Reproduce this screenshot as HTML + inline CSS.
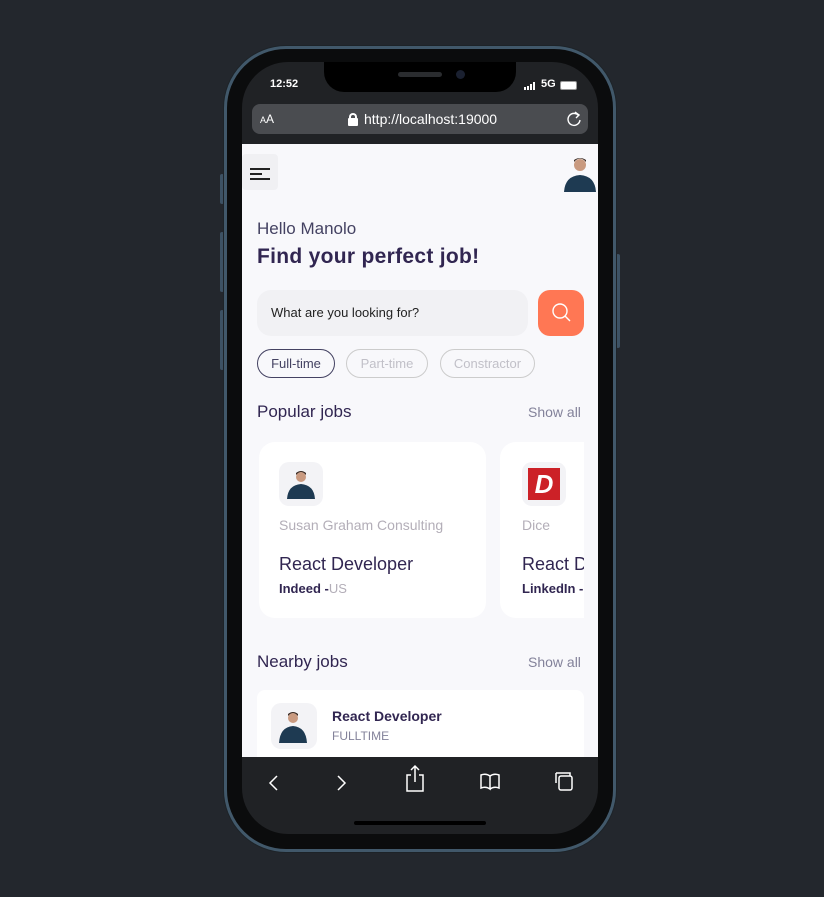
<!DOCTYPE html>
<html><head><style>
*{margin:0;padding:0;box-sizing:border-box}
body{width:824px;height:897px;background:#23272d;font-family:"Liberation Sans",sans-serif;position:relative;overflow:hidden}
.frame{position:absolute;left:224px;top:46px;width:392px;height:806px;border-radius:62px;background:#0b0c0d;border:3px solid #41586a;box-shadow:0 0 0 1px #1d2328}
.btn{position:absolute;width:4px;background:#3d5264;border-radius:2px}
.screen{position:absolute;left:242px;top:62px;width:356px;height:772px;border-radius:46px;overflow:hidden;background:#202225}
.notch{position:absolute;left:82px;top:0;width:192px;height:30px;background:#000;border-radius:0 0 20px 20px}
.abs{position:absolute}
.content{position:absolute;left:0;top:82px;width:356px;height:613px;background:#f8f8fb;overflow:hidden}
.t{position:absolute;white-space:nowrap}
.card{position:absolute;background:#fff;border-radius:16px}
.chip{position:absolute;height:29px;border-radius:15px;border:1px solid #ccc;font-size:13px;line-height:27px;text-align:center}
</style></head><body>
<div class="btn" style="left:220px;top:174px;height:30px"></div>
<div class="btn" style="left:220px;top:232px;height:60px"></div>
<div class="btn" style="left:220px;top:310px;height:60px"></div>
<div class="btn" style="left:616px;top:254px;height:94px"></div>
<div class="frame"></div>
<div class="screen">
 <div class="notch"><div class="abs" style="left:74px;top:10px;width:44px;height:5px;border-radius:3px;background:#2a2c2f"></div><div class="abs" style="left:132px;top:8px;width:9px;height:9px;border-radius:50%;background:#1a2030"></div></div>
 <div class="t" style="left:28px;top:16px;color:#fff;font-size:11px;font-weight:bold">12:52</div>
 <div class="abs" style="left:282px;top:20px;width:14px;height:8px">
  <div class="abs" style="left:0;top:5px;width:2px;height:3px;background:#fff"></div><div class="abs" style="left:3px;top:4px;width:2px;height:4px;background:#fff"></div><div class="abs" style="left:6px;top:2px;width:2px;height:6px;background:#fff"></div><div class="abs" style="left:9px;top:0;width:2px;height:8px;background:#fff"></div></div>
 <div class="t" style="left:299px;top:16px;color:#fff;font-size:11px;font-weight:bold">5G</div>
 <div class="abs" style="left:318px;top:19px;width:17px;height:9px;border-radius:2px;background:#fff;border:1px solid #999"></div>
 <div class="abs" style="left:10px;top:42px;width:336px;height:30px;border-radius:8px;background:#4a4c50"></div>
 <div class="t" style="left:18px;top:50px;color:#fff;font-size:12px"><span style="font-size:9px">A</span>A</div>
 <div class="abs" style="left:107px;top:51px;width:8px;height:8px;border:2px solid #fff;border-bottom:none;border-radius:4px 4px 0 0"></div>
 <div class="abs" style="left:106px;top:56px;width:10px;height:8px;background:#fff;border-radius:1px"></div>
 <div class="t" style="left:122px;top:49px;color:#fff;font-size:14px">http://localhost:19000</div>
 <svg class="abs" style="left:323px;top:48px" width="18" height="18" viewBox="0 0 18 18"><path d="M14 6A6 6 0 1 0 15 10" fill="none" stroke="#fff" stroke-width="1.4"/><path d="M10 2L14 5L11 8" fill="none" stroke="#fff" stroke-width="1.4"/></svg>
 <div class="content">
  <div class="abs" style="left:0;top:10px;width:36px;height:36px;background:#f0f0f3;border-radius:4px"></div>
  <div class="abs" style="left:8px;top:24px;width:20px;height:1.5px;background:#222"></div>
  <div class="abs" style="left:8px;top:29px;width:12px;height:1.5px;background:#222"></div>
  <div class="abs" style="left:8px;top:34px;width:20px;height:1.5px;background:#222"></div>
  <svg class="abs" style="left:320px;top:10px" width="36" height="38" viewBox="0 0 36 38"><circle cx="18" cy="11" r="6" fill="#c99a80"/><path d="M12 8Q18 1 24 8L24 6Q18 2 12 6Z" fill="#3a2a22"/><path d="M2 38Q3 22 18 21Q33 22 34 38Z" fill="#1e3a52"/></svg>
  <div class="t" style="left:15px;top:75px;font-size:17px;color:#444262">Hello Manolo</div>
  <div class="t" style="left:15px;top:101px;font-size:21px;font-weight:bold;color:#312651;letter-spacing:0.3px">Find your perfect job!</div>
  <div class="abs" style="left:15px;top:146px;width:271px;height:46px;background:#f1f1f4;border-radius:14px"></div>
  <div class="t" style="left:29px;top:161px;font-size:13px;color:#222">What are you looking for?</div>
  <div class="abs" style="left:296px;top:146px;width:46px;height:46px;background:#ff7754;border-radius:12px"></div>
  <svg class="abs" style="left:308px;top:157px" width="22" height="22" viewBox="0 0 22 22"><circle cx="10" cy="10" r="7" fill="none" stroke="#fff" stroke-width="1.4"/><path d="M15 15L20 20" stroke="#fff" stroke-width="1.4"/></svg>
  <div class="chip" style="left:15px;top:205px;width:78px;border-color:#444262;color:#444262">Full-time</div>
  <div class="chip" style="left:104px;top:205px;width:82px;color:#c1c0c8">Part-time</div>
  <div class="chip" style="left:198px;top:205px;width:95px;color:#c1c0c8">Constractor</div>
  <div class="t" style="left:15px;top:258px;font-size:17px;color:#312651">Popular jobs</div>
  <div class="t" style="left:286px;top:260px;font-size:14px;color:#83829a">Show all</div>
  <div class="card" style="left:17px;top:298px;width:227px;height:176px"></div>
  <div class="abs" style="left:37px;top:318px;width:44px;height:44px;border-radius:10px;background:#f3f3f6"></div>
  <svg class="abs" style="left:44px;top:324px" width="30" height="31" viewBox="0 0 30 31"><circle cx="15" cy="9" r="5" fill="#c99a80"/><path d="M10 7Q15 1 20 7L20 5Q15 1 10 5Z" fill="#3a2a22"/><path d="M1 31Q2 17 15 16Q28 17 29 31Z" fill="#1e3a52"/></svg>
  <div class="t" style="left:37px;top:373px;font-size:14px;color:#b3aeb8">Susan Graham Consulting</div>
  <div class="t" style="left:37px;top:410px;font-size:18px;color:#312651">React Developer</div>
  <div class="t" style="left:37px;top:437px;font-size:13px;font-weight:bold;color:#312651">Indeed -<span style="font-weight:normal;color:#b3aeb8">US</span></div>
  <div class="card" style="left:258px;top:298px;width:120px;height:176px"></div>
  <div class="abs" style="left:280px;top:318px;width:44px;height:44px;border-radius:10px;background:#f3f3f6"></div>
  <div class="abs" style="left:286px;top:324px;width:32px;height:32px;background:#cc2127;color:#fff;font-weight:bold;font-style:italic;font-size:26px;text-align:center;line-height:32px">D</div>
  <div class="t" style="left:280px;top:373px;font-size:14px;color:#b3aeb8">Dice</div>
  <div class="t" style="left:280px;top:410px;font-size:18px;color:#312651">React Developer</div>
  <div class="t" style="left:280px;top:437px;font-size:13px;font-weight:bold;color:#312651">LinkedIn -</div>
  <div class="abs" style="left:342px;top:290px;width:14px;height:190px;background:#f8f8fb"></div>
  <div class="t" style="left:15px;top:508px;font-size:17px;color:#312651">Nearby jobs</div>
  <div class="t" style="left:286px;top:510px;font-size:14px;color:#83829a">Show all</div>
  <div class="card" style="left:15px;top:546px;width:327px;height:80px;border-radius:8px"></div>
  <div class="abs" style="left:29px;top:559px;width:46px;height:46px;border-radius:10px;background:#f3f3f6"></div>
  <svg class="abs" style="left:36px;top:564px" width="30" height="35" viewBox="0 0 30 35"><circle cx="15" cy="10" r="5" fill="#c99a80"/><path d="M10 8Q15 2 20 8L20 6Q15 2 10 6Z" fill="#3a2a22"/><path d="M1 35Q2 19 15 18Q28 19 29 35Z" fill="#1e3a52"/></svg>
  <div class="t" style="left:90px;top:564px;font-size:14px;font-weight:bold;color:#312651">React Developer</div>
  <div class="t" style="left:90px;top:585px;font-size:12px;color:#83829a">FULLTIME</div>
 </div>
 <svg class="abs" style="left:0;top:695px" width="356" height="77" viewBox="0 0 356 77">
  <g fill="none" stroke="#fff" stroke-width="1.5">
   <path d="M35 19L28 26L35 33"/>
   <path d="M96 19L103 26L96 33"/>
   <path d="M169 18L165 18L165 34L181 34L181 18L177 18M169 13L173 9L177 13M173 9L173 25"/>
   <path d="M239 18Q244 16 248 19L248 32Q244 29 239 31ZM248 19Q252 16 257 18L257 31Q252 29 248 32"/>
   <path d="M314 16L314 26M314 16L328 16L328 19"/><rect x="317" y="19" width="13" height="14" rx="2"/>
  </g>
  <rect x="112" y="64" width="132" height="4" rx="2" fill="#000"/>
 </svg>
</div>
</body></html>
